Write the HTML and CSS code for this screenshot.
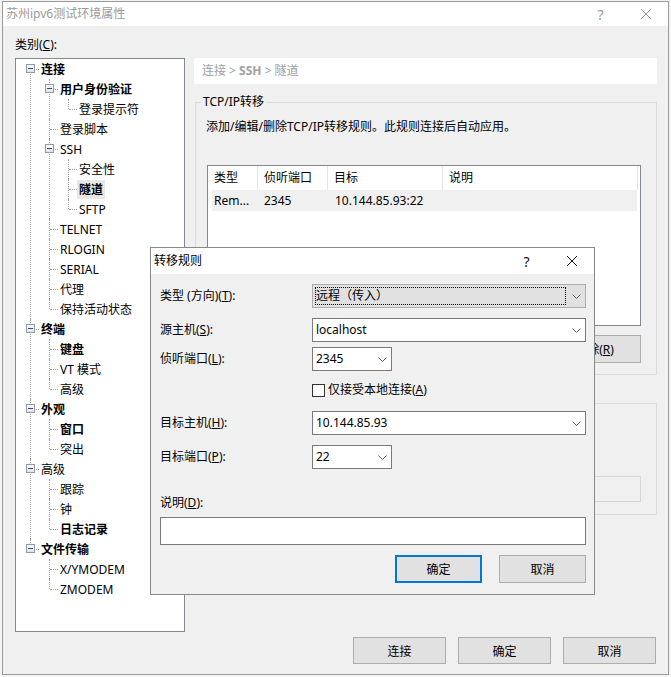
FILE: index.html
```html
<!DOCTYPE html>
<html lang="zh-CN">
<head>
<meta charset="utf-8">
<title>苏州ipv6测试环境属性</title>
<link rel="stylesheet" href="styles.css">
</head>
<body>
<div class="window">
  <div class="titlebar">
    <span class="title">苏州ipv6测试环境属性</span>
    <span class="cap cap-help">?</span>
    <span class="cap"><svg class="xicon" width="10" height="10" viewBox="0 0 10 10"><path d="M0 0L10 10M10 0L0 10" stroke="#9a9a9a" stroke-width="1" fill="none"/></svg></span>
  </div>
  <div class="body">
    <div class="cat-label">类别(<u>C</u>):</div>
    <div class="main">
      <div class="tree">
        <ul class="tree-root">
          <li><div class="node"><i class="exp"></i><span class="label b">连接</span></div>
            <ul>
              <li><div class="node"><i class="exp"></i><span class="label b">用户身份验证</span></div>
                <ul><li><div class="node"><span class="label">登录提示符</span></div></li></ul>
              </li>
              <li><div class="node"><span class="label">登录脚本</span></div></li>
              <li><div class="node"><i class="exp"></i><span class="label">SSH</span></div>
                <ul>
                  <li><div class="node"><span class="label">安全性</span></div></li>
                  <li><div class="node"><span class="label b sel">隧道</span></div></li>
                  <li><div class="node"><span class="label">SFTP</span></div></li>
                </ul>
              </li>
              <li><div class="node"><span class="label">TELNET</span></div></li>
              <li><div class="node"><span class="label">RLOGIN</span></div></li>
              <li><div class="node"><span class="label">SERIAL</span></div></li>
              <li><div class="node"><span class="label">代理</span></div></li>
              <li><div class="node"><span class="label">保持活动状态</span></div></li>
            </ul>
          </li>
          <li><div class="node"><i class="exp"></i><span class="label b">终端</span></div>
            <ul>
              <li><div class="node"><span class="label b">键盘</span></div></li>
              <li><div class="node"><span class="label">VT 模式</span></div></li>
              <li><div class="node"><span class="label">高级</span></div></li>
            </ul>
          </li>
          <li><div class="node"><i class="exp"></i><span class="label b">外观</span></div>
            <ul>
              <li><div class="node"><span class="label b">窗口</span></div></li>
              <li><div class="node"><span class="label">突出</span></div></li>
            </ul>
          </li>
          <li><div class="node"><i class="exp"></i><span class="label">高级</span></div>
            <ul>
              <li><div class="node"><span class="label">跟踪</span></div></li>
              <li><div class="node"><span class="label">钟</span></div></li>
              <li><div class="node"><span class="label b">日志记录</span></div></li>
            </ul>
          </li>
          <li><div class="node"><i class="exp"></i><span class="label b">文件传输</span></div>
            <ul>
              <li><div class="node"><span class="label">X/YMODEM</span></div></li>
              <li><div class="node"><span class="label">ZMODEM</span></div></li>
            </ul>
          </li>
        </ul>
      </div>
      <div class="panel">
        <div class="crumb">连接 &gt; <b>SSH</b> &gt; 隧道</div>
        <fieldset class="group g1">
          <legend>TCP/IP转移</legend>
          <p class="desc">添加/编辑/删除TCP/IP转移规则。此规则连接后自动应用。</p>
          <div class="list">
            <div class="lh">
              <div class="lc w1">类型</div>
              <div class="lc w2">侦听端口</div>
              <div class="lc w3">目标</div>
              <div class="lc w4">说明</div>
            </div>
            <div class="lr">
              <div class="rc r1">Rem...</div>
              <div class="rc r2">2345</div>
              <div class="rc r3">10.144.85.93:22</div>
            </div>
          </div>
          <div class="list-btns">
            <button class="btn">删除(<u>R</u>)</button>
          </div>
        </fieldset>
        <fieldset class="group g2">
          <div class="g2-r1"></div>
          <div class="g2-r2"><span class="tb-dis"></span></div>
        </fieldset>
      </div>
    </div>
    <div class="footer">
      <button class="btn fbtn">连接</button>
      <button class="btn fbtn">确定</button>
      <button class="btn fbtn">取消</button>
    </div>
  </div>

  <div class="dialog">
    <div class="dtitle">
      <span class="title dark">转移规则</span>
      <span class="cap cap-help dark">?</span>
      <span class="cap"><svg class="xicon" width="10" height="10" viewBox="0 0 10 10"><path d="M0 0L10 10M10 0L0 10" stroke="#111" stroke-width="1" fill="none"/></svg></span>
    </div>
    <div class="dbody">
      <div class="frow">
        <div class="flabel">类型 (方向)(<u>T</u>):</div>
        <div class="combo wide list-style">
          <div class="focus">远程（传入）</div>
          <span class="chev"><svg width="9" height="5" viewBox="0 0 9 5"><path d="M0.5 0.5L4.5 4.5L8.5 0.5" stroke="#606060" fill="none"/></svg></span>
        </div>
      </div>
      <div class="frow m10">
        <div class="flabel">源主机(<u>S</u>):</div>
        <div class="combo wide"><span class="ctext">localhost</span>
          <span class="chev"><svg width="9" height="5" viewBox="0 0 9 5"><path d="M0.5 0.5L4.5 4.5L8.5 0.5" stroke="#606060" fill="none"/></svg></span>
        </div>
      </div>
      <div class="frow m5">
        <div class="flabel">侦听端口(<u>L</u>):</div>
        <div class="combo narrow"><span class="ctext">2345</span>
          <span class="chev"><svg width="9" height="5" viewBox="0 0 9 5"><path d="M0.5 0.5L4.5 4.5L8.5 0.5" stroke="#606060" fill="none"/></svg></span>
        </div>
      </div>
      <div class="frow m9 cbrow">
        <div class="flabel"></div>
        <span class="cb"></span><span class="cblabel">仅接受本地连接(<u>A</u>)</span>
      </div>
      <div class="frow m11">
        <div class="flabel">目标主机(<u>H</u>):</div>
        <div class="combo wide"><span class="ctext">10.144.85.93</span>
          <span class="chev"><svg width="9" height="5" viewBox="0 0 9 5"><path d="M0.5 0.5L4.5 4.5L8.5 0.5" stroke="#606060" fill="none"/></svg></span>
        </div>
      </div>
      <div class="frow m10">
        <div class="flabel">目标端口(<u>P</u>):</div>
        <div class="combo narrow"><span class="ctext">22</span>
          <span class="chev"><svg width="9" height="5" viewBox="0 0 9 5"><path d="M0.5 0.5L4.5 4.5L8.5 0.5" stroke="#606060" fill="none"/></svg></span>
        </div>
      </div>
      <div class="dlabel">说明(<u>D</u>):</div>
      <div class="dtext"></div>
      <div class="dbtns">
        <button class="btn dbtn default">确定</button>
        <button class="btn dbtn">取消</button>
      </div>
    </div>
  </div>
</div>
</body>
</html>
```

FILE: styles.css
```css
html, body {
  margin: 0;
  padding: 0;
}
body {
  background: #f4f4f4;
  font-family: "Noto Sans", "Noto Sans CJK SC", sans-serif;
  font-size: 12px;
  color: #000;
}
u { text-decoration: underline; text-underline-offset: 1px; }

.window {
  position: relative;
  margin: 1px 0 0 2px;
  width: 667px;
  height: 674px;
  box-sizing: border-box;
  border: 1px solid #9a9a9a;
  background: #f0f0f0;
}

.titlebar {
  height: 24px;
  background: #fff;
  display: flex;
  align-items: center;
}
.title {
  padding-left: 3px;
  color: #9a9a9a;
  line-height: 16px;
}
.title.dark { color: #000; }
.cap {
  width: 45px;
  height: 100%;
  display: flex;
  align-items: center;
  justify-content: center;
  color: #9a9a9a;
  font-size: 14px;
}
.cap-help { margin-left: auto; }
.cap.dark { color: #111; }
.xicon { display: block; }

.body {
  padding: 11px 10px 0 12px;
}
.cat-label {
  line-height: 16px;
  margin-bottom: 5px;
}
.main {
  display: grid;
  grid-template-columns: 170px 463px;
  column-gap: 9px;
  height: 574px;
}

/* tree */
.tree {
  box-sizing: border-box;
  border: 1px solid #828790;
  background: #fff;
  overflow: hidden;
}
.tree ul {
  list-style: none;
  margin: 0;
  padding: 0;
}
.tree ul ul { padding-left: 19px; }
.tree li { position: relative; }
.tree li::before {
  content: "";
  position: absolute;
  left: 14px;
  top: 0;
  bottom: 0;
  border-left: 1px dotted #a0a0a0;
}
.tree li:last-child::before {
  bottom: auto;
  height: 10px;
}
.tree-root > li:first-child::before { top: 10px; }
.node {
  position: relative;
  height: 20px;
  padding-left: 23px;
  display: flex;
  align-items: flex-start;
  white-space: nowrap;
}
.node::before {
  content: "";
  position: absolute;
  left: 15px;
  top: 10px;
  width: 8px;
  border-top: 1px dotted #a0a0a0;
}
.exp {
  position: absolute;
  z-index: 1;
  left: 10px;
  top: 5px;
  width: 9px;
  height: 9px;
  box-sizing: border-box;
  border: 1px solid #919aa6;
  background: linear-gradient(#ffffff, #e2e2e2);
}
.exp::after {
  content: "";
  position: absolute;
  left: 1px;
  top: 3px;
  width: 5px;
  height: 1px;
  background: #2e4a8c;
}
.label {
  margin-top: 1px;
  padding: 0 2px;
  line-height: 20px;
  height: 19px;
  overflow: visible;
}
.b { font-weight: bold; }
.sel { background: #e8e8e8; }

/* right panel */
.panel {
  display: flex;
  flex-direction: column;
  min-width: 0;
}
.crumb {
  height: 26px;
  line-height: 26px;
  background: #fff;
  padding-left: 8px;
  color: #a0a0a0;
}
.crumb b { font-weight: bold; }
.group {
  margin: 10px 0 0 1px;
  padding: 0 15px 11px 10px;
  border: 1px solid #dcdcdc;
  min-width: 0;
}
.group legend {
  padding: 0 2px;
  margin-left: -5px;
  line-height: 16px;
}
.desc {
  margin: 9px 0 0;
  line-height: 16px;
}
.list {
  margin: 30px 0 0 1px;
  height: 161px;
  box-sizing: border-box;
  border: 1px solid #828790;
  background: #fff;
}
.lh {
  display: flex;
  height: 24px;
}
.lc {
  box-sizing: border-box;
  border-right: 1px solid #e5e5e5;
  padding-left: 6px;
  line-height: 24px;
}
.w1 { width: 50px; }
.w2 { width: 70px; }
.w3 { width: 115px; }
.w4 { width: 195px; }
.lr {
  display: flex;
  margin-left: 4px;
  width: 425px;
  height: 21px;
  line-height: 21px;
  background: #f0f0f0;
}
.rc { box-sizing: border-box; }
.r1 { width: 46px; padding-left: 2px; }
.r2 { width: 70px; padding-left: 6px; }
.r3 { padding-left: 7px; }
.list-btns {
  display: flex;
  justify-content: flex-end;
  gap: 12px;
  margin-top: 9px;
}
.btn {
  width: 93px;
  height: 28px;
  box-sizing: border-box;
  border: 1px solid #adadad;
  background: #e1e1e1;
  font: inherit;
  color: #000;
  padding: 0;
  margin: 0;
}
.g2 {
  margin-top: 28px;
  padding-bottom: 12px;
}
.g2-r1 {
  margin-top: 17px;
  height: 20px;
}
.g2-r2 {
  margin-top: 35px;
  display: flex;
  justify-content: flex-end;
}
.tb-dis {
  width: 260px;
  height: 26px;
  box-sizing: border-box;
  border: 1px solid #d7d7d7;
  background: #f0f0f0;
}

.footer {
  display: flex;
  justify-content: flex-end;
  gap: 12px;
  margin-top: 5px;
  padding-right: 2px;
}
.fbtn { height: 27px; }

/* dialog */
.dialog {
  position: absolute;
  left: 147px;
  top: 245px;
  width: 445px;
  height: 348px;
  box-sizing: border-box;
  border: 1px solid #888;
  background: #f0f0f0;
}
.dtitle {
  height: 26px;
  background: #fff;
  display: flex;
  align-items: center;
}
.dbody {
  padding: 10px 8px 0 9px;
}
.frow {
  display: flex;
  align-items: center;
}
.m5 { margin-top: 5px; }
.m9 { margin-top: 9px; }
.m10 { margin-top: 10px; }
.m11 { margin-top: 11px; }
.flabel {
  width: 152px;
  flex: none;
  line-height: 16px;
}
.combo {
  box-sizing: border-box;
  height: 24px;
  border: 1px solid #7a7a7a;
  background: #fff;
  display: flex;
  align-items: center;
}
.combo.wide { width: 274px; }
.combo.narrow { width: 80px; }
.ctext {
  padding-left: 3px;
  line-height: 16px;
}
.chev {
  margin-left: auto;
  width: 17px;
  height: 100%;
  display: flex;
  align-items: center;
  justify-content: center;
}
.chev svg { display: block; }
.combo.list-style {
  background: #e1e1e1;
  border-color: #adadad;
}
.focus {
  flex: 1;
  box-sizing: border-box;
  height: 18px;
  margin: 0 2px 0 2px;
  border: 1px dotted #000;
  line-height: 16px;
  padding-left: 0;
}
.cbrow { height: 20px; }
.cb {
  width: 13px;
  height: 13px;
  box-sizing: border-box;
  border: 1px solid #333;
  background: #fff;
  flex: none;
}
.cblabel {
  margin-left: 3px;
  line-height: 16px;
}
.dlabel {
  margin-top: 26px;
  line-height: 16px;
}
.dtext {
  margin-top: 6px;
  width: 426px;
  height: 28px;
  box-sizing: border-box;
  border: 1px solid #7a7a7a;
  background: #fff;
}
.dbtns {
  display: flex;
  justify-content: flex-end;
  gap: 17px;
  margin-top: 10px;
  width: 426px;
}
.dbtn {
  width: 87px;
  height: 28px;
}
.dbtn.default {
  border: 2px solid #0078d7;
}
```
